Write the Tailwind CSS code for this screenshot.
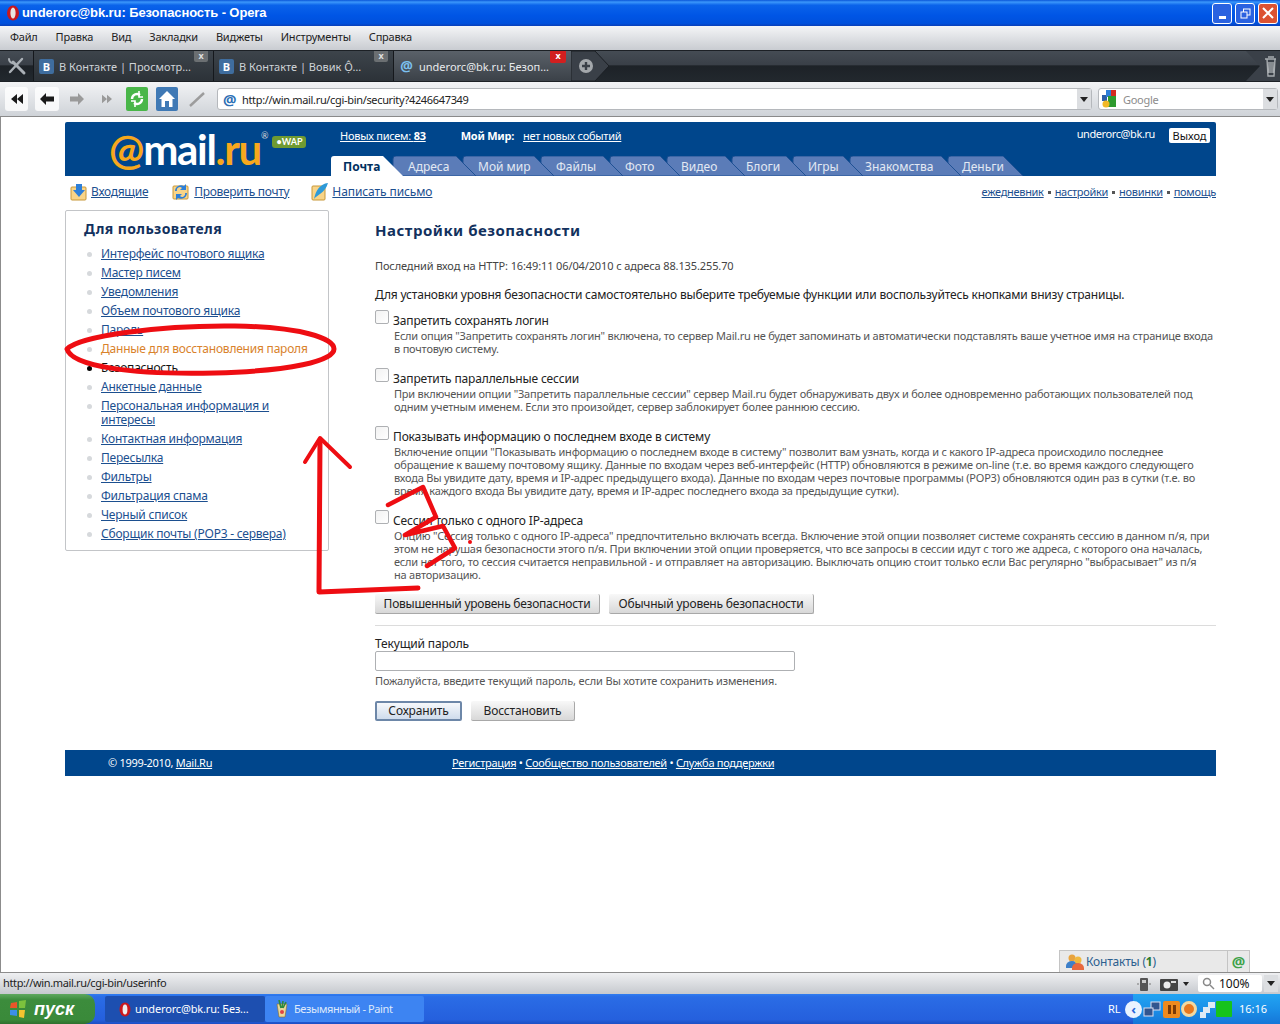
<!DOCTYPE html>
<html lang="ru">
<head>
<meta charset="utf-8">
<title>underorc@bk.ru: Безопасность - Opera</title>
<script src="https://cdn.jsdelivr.net/npm/@tailwindcss/browser@4"></script>
</head>
<body class="relative w-[1280px] h-[1024px] overflow-hidden bg-white font-['Noto_Sans',sans-serif] text-[11px] text-[#333]">

<!-- title bar -->
<div class="h-[26px] flex items-center pl-[6px] pr-[2px] bg-[linear-gradient(180deg,#0a56d8_0%,#3b97fb_8%,#0a63ea_20%,#0055e5_60%,#0050dc_90%,#0a3fb8_100%)]">
  <svg class="w-[14px] h-[16px]" viewBox="0 0 14 16"><ellipse cx="7" cy="8" rx="6" ry="7.5" fill="#c8181e"/><ellipse cx="7" cy="8" rx="2.6" ry="5.6" fill="#e8e4e0"/></svg>
  <span class="ml-[2px] font-bold text-[13px] tracking-[-0.1px] text-white font-['Liberation_Sans',sans-serif]">underorc@bk.ru: Безопасность - Opera</span>
  <div class="ml-auto flex gap-[3px]">
    <div class="w-[20px] h-[21px] rounded-[3px] border border-white bg-[#2a62e0] flex items-end justify-center pb-[4px]"><div class="w-[7px] h-[3px] bg-white"></div></div>
    <div class="w-[20px] h-[21px] rounded-[3px] border border-white bg-[#2a62e0] flex items-center justify-center"><svg class="w-[11px] h-[11px]" viewBox="0 0 11 11" fill="none" stroke="#fff"><rect x="3.5" y="1" width="6.5" height="6"/><rect x="1" y="4" width="6" height="6" fill="#2a62e0"/></svg></div>
    <div class="w-[20px] h-[21px] rounded-[3px] border border-white bg-[#dc5232] flex items-center justify-center"><svg class="w-[12px] h-[12px]" viewBox="0 0 12 12" stroke="#fff" stroke-width="2"><path d="M1 1 11 11M11 1 1 11"/></svg></div>
  </div>
</div>

<!-- menu -->
<div class="h-[24px] pb-[2px] flex items-center pl-[10px] gap-[18px] tracking-[-0.2px] text-[#222] bg-[linear-gradient(180deg,#f4f5f7,#c9ccd1)]">
  <span>Файл</span><span>Правка</span><span>Вид</span><span>Закладки</span><span>Виджеты</span><span>Инструменты</span><span>Справка</span>
</div>

<!-- tabs -->
<div class="h-[32px] flex border-y border-[#1c2025] bg-[linear-gradient(180deg,#454c54_0%,#3a4048_45%,#1d2227_50%,#22282e_100%)] text-[11px] text-[#cfd3d7]">
  <div class="w-[34px] flex items-center justify-center border-r border-[#15181c]">
    <svg class="w-[20px] h-[20px]" viewBox="0 0 20 20" fill="none" stroke="#aab0b6" stroke-linecap="round"><path d="M6 6 17 17" stroke-width="3"/><path d="M15 3 3 16" stroke-width="2.400"/><path d="M2 3a4 4 0 0 0 5 4" stroke-width="2"/></svg>
  </div>
  <div class="w-[180px] relative flex items-center pl-[5px] border-r border-[#15181c] bg-[linear-gradient(180deg,#3d444b,#2c3238)]">
    <div class="w-[15px] h-[15px] rounded-[2px] bg-[#3f6d9e] text-white font-bold text-[11px] leading-[15px] text-center">В</div>
    <span class="ml-[5px] mt-[2px] whitespace-nowrap">В Контакте | Просмотр…</span>
    <div class="absolute right-[5px] top-0 w-[14px] h-[11px] rounded-b-[2px] bg-[#6b6f72] text-[9px] leading-[10px] text-center font-bold text-[#ddd]">x</div>
  </div>
  <div class="w-[180px] relative flex items-center pl-[5px] border-r border-[#15181c] bg-[linear-gradient(180deg,#3d444b,#2c3238)]">
    <div class="w-[15px] h-[15px] rounded-[2px] bg-[#3f6d9e] text-white font-bold text-[11px] leading-[15px] text-center">В</div>
    <span class="ml-[5px] mt-[2px] whitespace-nowrap">В Контакте | Вовик Ộ…</span>
    <div class="absolute right-[5px] top-0 w-[14px] h-[11px] rounded-b-[2px] bg-[#6b6f72] text-[9px] leading-[10px] text-center font-bold text-[#ddd]">x</div>
  </div>
  <div class="w-[177px] relative flex items-center pl-[5px] bg-[linear-gradient(180deg,#5a6169,#3b4148)] text-[#e8eaec]">
    <span class="w-[15px] h-[15px] text-[14px] leading-[14px] text-[#7cc0ef] text-center font-bold">@</span>
    <span class="ml-[5px] mt-[2px] whitespace-nowrap">underorc@bk.ru: Безоп…</span>
    <div class="absolute right-[5px] top-0 w-[16px] h-[12px] rounded-b-[2px] bg-[#d21f1f] text-[9px] leading-[10px] text-center font-bold text-white">x</div>
  </div>
  <div class="w-[38px] relative">
    <svg class="w-[38px] h-[30px]" viewBox="0 0 38 30"><path d="M0 0H24L38 15 24 30H0Z" fill="#3a4048" stroke="#1c2025"/><circle cx="15" cy="15" r="7" fill="#a4a8ac"/><path d="M15 11v8M11 15h8" stroke="#3a4048" stroke-width="2.400"/></svg>
  </div>
  <div class="ml-auto w-[34px] relative">
    <svg class="w-[34px] h-[30px]" viewBox="0 0 34 30"><path d="M0 0 14 15 0 30H34V0Z" fill="#3a4048"/><path d="M19 8h11M21 8l1 17h6l1-17M23 11v11M25 11v11M27 11v11M22 6h6" stroke="#a8acb0" stroke-width="1.400" fill="none"/></svg>
  </div>
</div>

<!-- address bar -->
<div class="h-[35px] flex items-center border-b border-[#8a8a8a] bg-[linear-gradient(180deg,#f2f3f5,#cfd3d8)]">
  <div class="ml-[5px] w-[23px] h-[24px] rounded-[3px] bg-white/80 flex items-center justify-center"><svg class="w-[14px] h-[12px]" viewBox="0 0 14 12" fill="#1a1a1a"><path d="M7 1 1 6l6 5ZM13 1 7 6l6 5Z"/></svg></div>
  <div class="ml-[7px] w-[24px] h-[24px] rounded-[3px] bg-white/80 flex items-center justify-center"><svg class="w-[14px] h-[12px]" viewBox="0 0 14 12" fill="#1a1a1a"><path d="M6 0 0 6l6 6V8.500h8v-5H6Z"/></svg></div>
  <div class="ml-[8px] w-[20px] h-[24px] flex items-center justify-center"><svg class="w-[14px] h-[12px]" viewBox="0 0 14 12" fill="#9a9a9a"><path d="M8 0l6 6-6 6V8.500H0v-5h8Z"/></svg></div>
  <div class="ml-[10px] w-[20px] h-[24px] flex items-center justify-center"><svg class="w-[12px] h-[10px]" viewBox="0 0 14 12" fill="#9a9a9a"><path d="M1 1l6 5-6 5ZM7 1l6 5-6 5Z"/></svg></div>
  <div class="ml-[9px] w-[22px] h-[24px] rounded-[2px] bg-[#49b649] flex items-center justify-center"><svg class="w-[16px] h-[18px]" viewBox="0 0 16 18" fill="none" stroke="#fff" stroke-width="2.400"><path d="M3 9a5 5 0 0 1 8-4M13 9a5 5 0 0 1-8 4"/><path d="M10 1v6h4M6 17v-6H2" stroke-width="1.600"/></svg></div>
  <div class="ml-[8px] w-[22px] h-[24px] rounded-[2px] bg-[#3f79b5] flex items-center justify-center"><svg class="w-[18px] h-[18px]" viewBox="0 0 18 18"><path d="M9 1 1 9h2.500v8h11V9H17Z" fill="#fff"/><path d="M7 17v-6h4v6" fill="#3f79b5"/></svg></div>
  <div class="ml-[8px] w-[22px] h-[24px] flex items-center justify-center"><svg class="w-[18px] h-[18px]" viewBox="0 0 18 18" stroke="#9c9c9c" stroke-width="2.400"><path d="M2 16 16 3"/></svg></div>
  <div class="ml-[9px] w-[875px] h-[22px] flex items-center rounded-[3px] border border-[#b5b8bc] bg-white">
    <span class="ml-[5px] w-[15px] text-[15px] leading-[15px] font-bold text-[#2d6fb5]">@</span>
    <span class="ml-[4px] mt-[2px] tracking-[-0.33px] text-[#222]">http://win.mail.ru/cgi-bin/security?4246647349</span>
    <div class="ml-auto w-[14px] h-full bg-[#dcdee1] flex items-center justify-center"><div class="w-0 h-0 border-x-[4px] border-x-transparent border-t-[5px] border-t-[#222]"></div></div>
  </div>
  <div class="ml-[6px] w-[180px] h-[22px] flex items-center rounded-[3px] border border-[#b5b8bc] bg-white">
    <svg class="ml-[2px] w-[16px] h-[18px]" viewBox="0 0 16 18"><rect x="1" y="5" width="5" height="6" fill="#2d5fa8"/><rect x="5" y="0" width="5" height="7" fill="#2d7fd8"/><rect x="10" y="0" width="5" height="6" fill="#d42a20"/><rect x="7" y="6" width="8" height="11" fill="#2e9a2e"/><circle cx="5" cy="14" r="3.500" fill="#f2b826"/></svg>
    <span class="ml-[6px] mt-[2px] tracking-[-0.3px] text-[#8c8c8c]">Google</span>
    <div class="ml-auto w-[14px] h-full bg-[#dcdee1] flex items-center justify-center"><div class="w-0 h-0 border-x-[4px] border-x-transparent border-t-[5px] border-t-[#222]"></div></div>
  </div>
</div>

<!-- page -->
<div class="h-[856px] relative border-l border-b border-[#8c8c8c] pl-[64px] pr-[64px] pt-[5px]">

  <!-- header -->
  <div class="h-[54px] relative rounded-t-[2px] bg-[#00468c] text-white">
    <div class="absolute left-[44px] top-[3px] flex items-start text-[42px] leading-[48px] font-['Lato',sans-serif] font-bold tracking-[-1.3px]">
      <span class="text-[#f7a81d]">@</span><span class="text-white">mail</span><span class="text-[#f7a81d]">.ru</span>
      <span class="mt-[1px] text-[9px] leading-[20px] text-[#d8d8d8] font-normal tracking-normal">®</span>
      <span class="ml-[4px] mt-[11px] w-[34px] h-[12px] rounded-[3px] bg-[#6f9a32] text-[9px] leading-[12px] text-white text-center tracking-normal">•WAP</span>
    </div>
    <div class="absolute left-[275px] top-[6px] flex whitespace-nowrap tracking-[-0.25px]">
      <span class="underline">Новых писем: <b>83</b></span>
      <b class="ml-[35px]">Мой Мир:</b>
      <span class="ml-[9px] underline">нет новых событий</span>
    </div>
    <div class="absolute right-[61px] top-[4px] tracking-[-0.4px]">underorc@bk.ru</div>
    <div class="absolute right-[6px] top-[6px] w-[41px] h-[15px] rounded-[2px] bg-white text-[#111] text-center leading-[15px]">Выход</div>

    <!-- tabs -->
    <svg class="absolute left-[266px] bottom-0 w-[700px] h-[20px]" viewBox="0 0 700 20">
      <path d="M617 20V3Q617 0 620 0H672L692 20Z" fill="#5b7cb8" stroke="#1f5194"/>
      <path d="M519 20V3Q519 0 522 0H610L630 20Z" fill="#5b7cb8" stroke="#1f5194"/>
      <path d="M462 20V3Q462 0 465 0H512L532 20Z" fill="#5b7cb8" stroke="#1f5194"/>
      <path d="M401 20V3Q401 0 404 0H455L475 20Z" fill="#5b7cb8" stroke="#1f5194"/>
      <path d="M336 20V3Q336 0 339 0H394L414 20Z" fill="#5b7cb8" stroke="#1f5194"/>
      <path d="M279 20V3Q279 0 282 0H329L349 20Z" fill="#5b7cb8" stroke="#1f5194"/>
      <path d="M210 20V3Q210 0 213 0H272L292 20Z" fill="#5b7cb8" stroke="#1f5194"/>
      <path d="M132 20V3Q132 0 135 0H203L223 20Z" fill="#5b7cb8" stroke="#1f5194"/>
      <path d="M62 20V3Q62 0 65 0H125L145 20Z" fill="#5b7cb8" stroke="#1f5194"/>
      <path d="M0 20V3Q0 0 3 0H52L72 20Z" fill="#fff"/>
    </svg>
    <div class="absolute left-[266px] bottom-0 h-[20px] flex text-[12px] leading-[21px] text-[#e3e9f3] whitespace-nowrap">
      <div class="w-[62px] pl-[12px] font-bold text-[#00305f]">Почта</div>
      <div class="w-[70px] pl-[15px]">Адреса</div>
      <div class="w-[78px] pl-[15px]">Мой мир</div>
      <div class="w-[69px] pl-[15px]">Файлы</div>
      <div class="w-[57px] pl-[15px]">Фото</div>
      <div class="w-[65px] pl-[14px]">Видео</div>
      <div class="w-[61px] pl-[14px]">Блоги</div>
      <div class="w-[57px] pl-[15px]">Игры</div>
      <div class="w-[98px] pl-[15px]">Знакомства</div>
      <div class="pl-[14px]">Деньги</div>
    </div>
  </div>

  <!-- toolbar -->
  <div class="h-[32px] flex items-center text-[12px] tracking-[-0.3px] text-[#1c4f8f]">
    <svg class="ml-[5px] w-[18px] h-[17px]" viewBox="0 0 18 17"><rect x="1" y="3" width="15" height="13" rx="1" fill="#f8d488" stroke="#c89838"/><path d="M6 0h6v6h3l-6 7-6-7h3Z" fill="#2d7fd8"/></svg>
    <span class="ml-[3px] underline">Входящие</span>
    <svg class="ml-[24px] w-[18px] h-[18px]" viewBox="0 0 18 18"><rect x="1" y="3" width="15" height="13" rx="1" fill="#f8d488" stroke="#c89838"/><path d="M3 8a6 6 0 0 1 9-5l2-2v6H8l2-2a3 3 0 0 0-5 3ZM15 10a6 6 0 0 1-9 5l-2 2v-6h6l-2 2a3 3 0 0 0 5-3Z" fill="#2d7fd8"/></svg>
    <span class="ml-[4px] underline">Проверить почту</span>
    <svg class="ml-[22px] w-[18px] h-[18px]" viewBox="0 0 18 18"><rect x="1" y="3" width="13" height="14" rx="1" fill="#f8d488" stroke="#c89838"/><path d="M17 0C9 1 5 7 3 16 6 12 14 10 17 0Z" fill="#2d9ad8"/></svg>
    <span class="ml-[3px] tracking-[-0.1px] underline">Написать письмо</span>
    <div class="ml-auto flex items-center gap-[4px] text-[11px] tracking-[-0.3px] text-[#1c4f8f]">
      <span class="underline">ежедневник</span><i class="w-[3px] h-[3px] bg-[#555]"></i>
      <span class="underline">настройки</span><i class="w-[3px] h-[3px] bg-[#555]"></i>
      <span class="underline">новинки</span><i class="w-[3px] h-[3px] bg-[#555]"></i>
      <span class="underline">помощь</span>
    </div>
  </div>

  <div class="mt-[2px] flex items-start">
    <!-- sidebar -->
    <div class="w-[264px] h-[341px] shrink-0 border border-[#c3c5c8] rounded-[2px] pt-[8px]">
      <div class="pl-[18px] text-[14px] leading-[20px] font-bold tracking-[0.4px] text-[#12315e] whitespace-nowrap">Для пользователя</div>
      <ul class="mt-[8px] flex flex-col gap-[5px] text-[12px] leading-[14px] tracking-[-0.22px] text-[#1c4f8f]">
        <li class="relative pl-[35px] whitespace-nowrap underline"><i class="absolute left-[21px] top-[5px] w-[5px] h-[5px] rounded-full bg-[#d6d9dc]"></i>Интерфейс почтового ящика</li>
        <li class="relative pl-[35px] underline"><i class="absolute left-[21px] top-[5px] w-[5px] h-[5px] rounded-full bg-[#d6d9dc]"></i>Мастер писем</li>
        <li class="relative pl-[35px] underline"><i class="absolute left-[21px] top-[5px] w-[5px] h-[5px] rounded-full bg-[#d6d9dc]"></i>Уведомления</li>
        <li class="relative pl-[35px] underline"><i class="absolute left-[21px] top-[5px] w-[5px] h-[5px] rounded-full bg-[#d6d9dc]"></i>Объем почтового ящика</li>
        <li class="relative pl-[35px] underline"><i class="absolute left-[21px] top-[5px] w-[5px] h-[5px] rounded-full bg-[#d6d9dc]"></i>Пароль</li>
        <li class="relative pl-[35px] whitespace-nowrap text-[#d9822b]"><i class="absolute left-[21px] top-[5px] w-[5px] h-[5px] rounded-full bg-[#d6d9dc]"></i>Данные для восстановления пароля</li>
        <li class="relative pl-[35px] text-[#111]"><i class="absolute left-[21px] top-[5px] w-[5px] h-[5px] rounded-full bg-black"></i>Безопасность</li>
        <li class="relative pl-[35px] underline"><i class="absolute left-[21px] top-[5px] w-[5px] h-[5px] rounded-full bg-[#d6d9dc]"></i>Анкетные данные</li>
        <li class="relative pl-[35px] underline"><i class="absolute left-[21px] top-[5px] w-[5px] h-[5px] rounded-full bg-[#d6d9dc]"></i>Персональная информация и<br>интересы</li>
        <li class="relative pl-[35px] underline"><i class="absolute left-[21px] top-[5px] w-[5px] h-[5px] rounded-full bg-[#d6d9dc]"></i>Контактная информация</li>
        <li class="relative pl-[35px] underline"><i class="absolute left-[21px] top-[5px] w-[5px] h-[5px] rounded-full bg-[#d6d9dc]"></i>Пересылка</li>
        <li class="relative pl-[35px] underline"><i class="absolute left-[21px] top-[5px] w-[5px] h-[5px] rounded-full bg-[#d6d9dc]"></i>Фильтры</li>
        <li class="relative pl-[35px] underline"><i class="absolute left-[21px] top-[5px] w-[5px] h-[5px] rounded-full bg-[#d6d9dc]"></i>Фильтрация спама</li>
        <li class="relative pl-[35px] underline"><i class="absolute left-[21px] top-[5px] w-[5px] h-[5px] rounded-full bg-[#d6d9dc]"></i>Черный список</li>
        <li class="relative pl-[35px] whitespace-nowrap underline"><i class="absolute left-[21px] top-[5px] w-[5px] h-[5px] rounded-full bg-[#d6d9dc]"></i>Сборщик почты (POP3 - сервера)</li>
      </ul>
    </div>

    <!-- main -->
    <div class="ml-[46px] w-[841px] shrink-0 pt-[10px] whitespace-nowrap">
      <h1 class="text-[15px] leading-[20px] font-bold tracking-[0.5px] text-[#12315e]">Настройки безопасности</h1>
      <p class="mt-[18px] leading-[16px] tracking-[-0.12px] text-[#444]">Последний вход на HTTP: 16:49:11 06/04/2010 с адреса 88.135.255.70</p>
      <p class="mt-[13px] text-[12px] leading-[16px] tracking-[-0.18px] text-[#222]">Для установки уровня безопасности самостоятельно выберите требуемые функции или воспользуйтесь кнопками внизу страницы.</p>

      <div class="mt-[6px] flex">
        <div class="mt-[1px] w-[14px] h-[14px] shrink-0 rounded-[2px] border border-[#aeb0b3] bg-[linear-gradient(135deg,#f2f2f2,#fff)]"></div>
        <div class="ml-[4px]">
          <div class="mt-[3px] text-[12px] leading-[18px] tracking-[-0.15px] text-[#222]">Запретить сохранять логин</div>
          <div class="mt-[-1px] ml-[1px] leading-[13px] tracking-[-0.21px] text-[#555]">Если опция "Запретить сохранять логин" включена, то сервер Mail.ru не будет запоминать и автоматически подставлять ваше учетное имя на странице входа<br>в почтовую систему.</div>
        </div>
      </div>
      <div class="mt-[12px] flex">
        <div class="mt-[1px] w-[14px] h-[14px] shrink-0 rounded-[2px] border border-[#aeb0b3] bg-[linear-gradient(135deg,#f2f2f2,#fff)]"></div>
        <div class="ml-[4px]">
          <div class="mt-[3px] text-[12px] leading-[18px] tracking-[-0.15px] text-[#222]">Запретить параллельные сессии</div>
          <div class="mt-[-1px] ml-[1px] leading-[13px] tracking-[-0.21px] text-[#555]">При включении опции "Запретить параллельные сессии" сервер Mail.ru будет обнаруживать двух и более одновременно работающих пользователей под<br>одним учетным именем. Если это произойдет, сервер заблокирует более раннюю сессию.</div>
        </div>
      </div>
      <div class="mt-[12px] flex">
        <div class="mt-[1px] w-[14px] h-[14px] shrink-0 rounded-[2px] border border-[#aeb0b3] bg-[linear-gradient(135deg,#f2f2f2,#fff)]"></div>
        <div class="ml-[4px]">
          <div class="mt-[3px] text-[12px] leading-[18px] tracking-[-0.15px] text-[#222]">Показывать информацию о последнем входе в систему</div>
          <div class="mt-[-1px] ml-[1px] leading-[13px] tracking-[-0.21px] text-[#555]">Включение опции "Показывать информацию о последнем входе в систему" позволит вам узнать, когда и с какого IP-адреса происходило последнее<br>обращение к вашему почтовому ящику. Данные по входам через веб-интерфейс (HTTP) обновляются в режиме on-line (т.е. во время каждого следующего<br>входа Вы увидите дату, время и IP-адрес предыдущего входа). Данные по входам через почтовые программы (POP3) обновляются один раз в сутки (т.е. во<br>время каждого входа Вы увидите дату, время и IP-адрес последнего входа за предыдущие сутки).</div>
        </div>
      </div>
      <div class="mt-[12px] flex">
        <div class="mt-[1px] w-[14px] h-[14px] shrink-0 rounded-[2px] border border-[#aeb0b3] bg-[linear-gradient(135deg,#f2f2f2,#fff)]"></div>
        <div class="ml-[4px]">
          <div class="mt-[3px] text-[12px] leading-[18px] tracking-[-0.15px] text-[#222]">Сессия только с одного IP-адреса</div>
          <div class="mt-[-1px] ml-[1px] leading-[13px] tracking-[-0.21px] text-[#555]">Опцию "Сессия только с одного IP-адреса" предпочтительно включать всегда. Включение этой опции позволяет системе сохранять сессию в данном п/я, при<br>этом не нарушая безопасности этого п/я. При включении этой опции проверяется, что все запросы в сессии идут с того же адреса, с которого она началась,<br>если нет того, то сессия считается неправильной - и отправляет на авторизацию. Выключать опцию стоит только если Вас регулярно "выбрасывает" из п/я<br>на авторизацию.</div>
        </div>
      </div>

      <div class="mt-[13px] flex gap-[9px] text-[12px] tracking-[-0.2px] text-[#222]">
        <div class="w-[225px] h-[20px] leading-[19px] tracking-[-0.25px] text-center rounded-[2px] border-r border-b border-[#a8a8a8] bg-[linear-gradient(180deg,#f8f8f8,#d8d8d8)]">Повышенный уровень безопасности</div>
        <div class="w-[205px] h-[20px] leading-[19px] text-center rounded-[2px] border-r border-b border-[#a8a8a8] bg-[linear-gradient(180deg,#f8f8f8,#d8d8d8)]">Обычный уровень безопасности</div>
      </div>
      <div class="mt-[11px] h-px bg-[#dcdcdc]"></div>
      <div class="mt-[10px] text-[12px] leading-[15px] tracking-[-0.15px] text-[#222]">Текущий пароль</div>
      <div class="w-[420px] h-[20px] rounded-[2px] border border-[#aeb0b3] bg-white"></div>
      <p class="mt-[3px] leading-[14px] tracking-[-0.15px] text-[#555]">Пожалуйста, введите текущий пароль, если Вы хотите сохранить изменения.</p>
      <div class="mt-[13px] flex gap-[9px] text-[12px] tracking-[-0.15px] text-[#222]">
        <div class="w-[87px] h-[20px] leading-[16px] text-center rounded-[2px] border-2 border-[#6d87a8] bg-[linear-gradient(180deg,#f6f8fb,#cfdcec)]">Сохранить</div>
        <div class="w-[104px] h-[20px] leading-[19px] text-center rounded-[2px] border-r border-b border-[#a8a8a8] bg-[linear-gradient(180deg,#f8f8f8,#d8d8d8)]">Восстановить</div>
      </div>
    </div>
  </div>

  <!-- footer -->
  <div class="mt-[29px] h-[26px] relative bg-[#00468c] text-white leading-[26px] text-[11px] tracking-[-0.3px] whitespace-nowrap">
    <span class="absolute left-[43px]">© 1999-2010, <span class="underline">Mail.Ru</span></span>
    <span class="absolute left-[387px]"><span class="underline">Регистрация</span> • <span class="underline">Сообщество пользователей</span> • <span class="underline">Служба поддержки</span></span>
  </div>

  <!-- contacts panel -->
  <div class="absolute right-[30px] bottom-0 w-[191px] h-[22px] flex items-center border-t border-l border-r border-[#c4c4c4] bg-[#e9e9e9] text-[12px] tracking-[-0.2px] text-[#2d5f8f]">
    <svg class="ml-[6px] w-[18px] h-[17px]" viewBox="0 0 18 17"><circle cx="6" cy="5" r="3.500" fill="#e8a33d"/><path d="M0 13a6 5 0 0 1 12 0v2H0Z" fill="#3d7fc8"/><circle cx="12" cy="7" r="3.500" fill="#f0b83d"/><path d="M6 15a6 5 0 0 1 12 0v2H6Z" fill="#e8683d"/></svg>
    <span class="ml-[2px] whitespace-nowrap">Контакты (<b class="text-[#2a7a2a]">1</b>)</span>
    <div class="ml-auto w-[22px] h-full border-l border-[#c4c4c4] flex items-center justify-center text-[15px] leading-none font-bold text-[#3da24a]">@</div>
  </div>
</div>

<!-- status bar -->
<div class="h-[21px] flex items-center pl-[3px] text-[11px] text-[#222] bg-[linear-gradient(180deg,#eff0f2,#c6c9ce)]">
  <span class="tracking-[-0.37px]">http://win.mail.ru/cgi-bin/userinfo</span>
  <div class="ml-auto flex items-center">
    <svg class="w-[16px] h-[16px]" viewBox="0 0 16 16"><rect x="4" y="2" width="8" height="13" rx="1" fill="#555"/><path d="M1 8h2M13 8h2" stroke="#777"/><rect x="6" y="4" width="4" height="3" fill="#ccc"/></svg>
    <svg class="ml-[8px] w-[18px] h-[14px]" viewBox="0 0 18 14"><rect x="0" y="2" width="18" height="12" rx="1" fill="#444"/><circle cx="7" cy="8" r="3.500" fill="#eee"/><rect x="11" y="4" width="5" height="2" fill="#ddd"/></svg>
    <div class="ml-[5px] w-0 h-0 border-x-[3px] border-x-transparent border-t-[4px] border-t-[#222]"></div>
    <div class="ml-[9px] w-[64px] h-[17px] rounded-[2px] bg-white flex items-center text-[12px] text-[#111]">
      <svg class="ml-[4px] w-[13px] h-[13px]" viewBox="0 0 13 13" fill="none" stroke="#888" stroke-width="1.500"><circle cx="5" cy="5" r="3.500"/><path d="M8 8l4 4"/></svg>
      <span class="ml-[4px]">100%</span>
    </div>
    <div class="w-[14px] h-[17px] ml-[2px] mr-[2px] bg-[#dcdee1] flex items-center justify-center"><div class="w-0 h-0 border-x-[4px] border-x-transparent border-t-[5px] border-t-[#222]"></div></div>
  </div>
</div>

<!-- taskbar -->
<div class="h-[30px] flex items-stretch text-[11px] tracking-[-0.15px] text-white bg-[linear-gradient(180deg,#2f7cf0_0%,#2a6ce6_10%,#2560dd_85%,#1c4fc4_100%)]">
  <div class="w-[95px] flex items-center pl-[9px] rounded-r-[10px] bg-[linear-gradient(180deg,#5fa85f,#3c8c3c_20%,#3a8a3a_85%,#2f702f)]">
    <svg class="w-[18px] h-[18px]" viewBox="0 0 18 18"><path d="M2 3l6-1v6H1Z" fill="#e8552a"/><path d="M10 1l7-1-1 8h-6Z" fill="#7cc23d"/><path d="M1 10h7v6l-7-1Z" fill="#3d8fe8"/><path d="M10 10h6l-1 8-5-1Z" fill="#f4c430"/></svg>
    <span class="ml-[7px] text-[18px] leading-none font-bold italic tracking-normal font-['Liberation_Sans',sans-serif]">пуск</span>
  </div>
  <div class="ml-[10px] my-[2px] w-[160px] flex items-center pl-[14px] rounded-[2px] bg-[#1d4fb0]">
    <svg class="w-[12px] h-[15px]" viewBox="0 0 12 15"><ellipse cx="6" cy="7.500" rx="5.500" ry="7" fill="#c8181e"/><ellipse cx="6" cy="7.500" rx="2.400" ry="5" fill="#eee"/></svg>
    <span class="ml-[4px] whitespace-nowrap">underorc@bk.ru: Без…</span>
  </div>
  <div class="my-[2px] w-[159px] flex items-center pl-[10px] rounded-[2px] bg-[#3d84f2]">
    <svg class="w-[14px] h-[18px]" viewBox="0 0 14 18"><path d="M2 4h10l-2 13H4Z" fill="#e8d89a" stroke="#8a6a2a" stroke-width=".6"/><path d="M4 0l2 8M8 1 7 8M11 2 8 8" stroke-width="1.600" stroke="#2d8a3d"/><circle cx="7" cy="12" r="2" fill="#d44"/></svg>
    <span class="ml-[5px] whitespace-nowrap tracking-[-0.4px] text-[#dfe9fb]">Безымянный - Paint</span>
  </div>
  <div class="ml-auto w-[147px] flex items-center bg-[linear-gradient(180deg,#22a4f2,#1b90e8_50%,#1576d8)] relative tracking-normal">
    <span class="absolute left-[-25px] text-[11px]">RL</span>
    <div class="ml-[-8px] w-[17px] h-[17px] rounded-full bg-[#eaf3ff] text-[#2866d8] flex items-center justify-center text-[13px] font-bold leading-none">‹</div>
    <svg class="ml-[1px] w-[18px] h-[17px]" viewBox="0 0 18 17"><rect x="8" y="1" width="9" height="8" fill="#31558f" stroke="#dde"/><rect x="1" y="7" width="9" height="8" fill="#31558f" stroke="#dde"/></svg>
    <div class="ml-[2px] w-[17px] h-[17px] rounded-[2px] bg-[#ee8a1e] flex items-center justify-center gap-[2px]"><i class="w-[3px] h-[9px] bg-[#7a3a06]"></i><i class="w-[3px] h-[9px] bg-[#7a3a06]"></i></div>
    <div class="ml-[1px] w-[16px] h-[16px] rounded-full border-[3px] border-[#f4d9a0] bg-[#e8781e]"></div>
    <svg class="ml-[2px] w-[17px] h-[17px]" viewBox="0 0 17 17" fill="#dfeaf5"><rect x="9" y="1" width="7" height="6"/><rect x="4" y="6" width="7" height="6"/><rect x="1" y="11" width="6" height="6"/></svg>
    <div class="w-[16px] h-[16px] rounded-[1px] bg-[#16c31c]"></div>
    <span class="ml-[7px] text-[11px] whitespace-nowrap">16:16</span>
  </div>
</div>

<!-- hand-drawn annotation -->
<svg class="absolute left-0 top-0 w-[1280px] h-[1024px] pointer-events-none" viewBox="0 0 1280 1024" fill="none" stroke="#ee0d12" stroke-linecap="round" stroke-linejoin="round">
  <path stroke-width="5" d="M67 349C80 336 160 325 235 326 300 327 334 338 334 349 334 361 290 371 215 373 130 375 72 366 67 349Z"/>
  <path stroke-width="5" d="M320 440 319 592 418 588"/>
  <path stroke-width="4" d="M305 462 320 438 350 467"/>
  <path stroke-width="4.500" d="M388 505 423 487 436 517 405 535 443 526 455 548 427 566"/>
  <circle cx="470" cy="542" r="2" fill="#ee0d12" stroke="none"/>
</svg>
</body>
</html>
